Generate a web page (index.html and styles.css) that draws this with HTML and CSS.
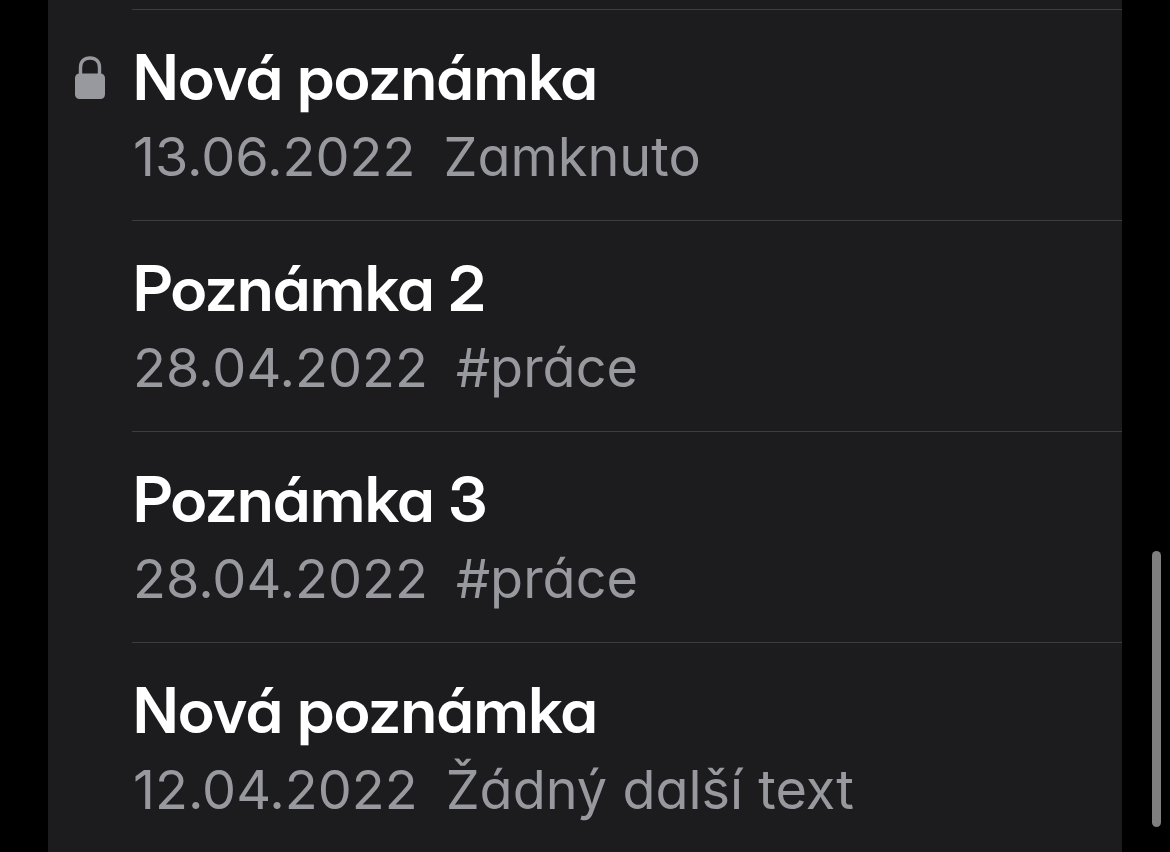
FILE: index.html
```
<!DOCTYPE html>
<html lang="cs">
<head>
<meta charset="utf-8">
<meta name="viewport" content="width=device-width, initial-scale=1">
<title>Poznámky</title>
<link rel="stylesheet" href="styles.css">
</head>
<body>
<main class="notes">
  <ul class="list">
    <li class="note">
      <span class="mark">
        <svg class="lock" viewBox="0 0 30 44" role="img" aria-label="Zamknuto"><path d="M5.500 20V11.500C5.500 5.500 9 2 15 2S24.500 5.500 24.500 11.500V20" fill="none" stroke="currentColor" stroke-width="3.400"/><rect y="17.500" width="30" height="25.500" rx="4.500" fill="currentColor"/></svg>
      </span>
      <div class="body"><h2 class="title">Nová poznámka</h2><p class="meta"><time datetime="2022-06-13">13.06.2022</time><span>Zamknuto</span></p></div>
    </li>
    <li class="note">
      <span class="mark"></span>
      <div class="body"><h2 class="title">Poznámka 2</h2><p class="meta"><time datetime="2022-04-28">28.04.2022</time><span>#práce</span></p></div>
    </li>
    <li class="note">
      <span class="mark"></span>
      <div class="body"><h2 class="title">Poznámka 3</h2><p class="meta"><time datetime="2022-04-28">28.04.2022</time><span>#práce</span></p></div>
    </li>
    <li class="note">
      <span class="mark"></span>
      <div class="body"><h2 class="title">Nová poznámka</h2><p class="meta"><time datetime="2022-04-12">12.04.2022</time><span>Žádný další text</span></p></div>
    </li>
  </ul>
</main>
<div class="scrollbar"></div>
</body>
</html>
```
FILE: styles.css
```
* { box-sizing: border-box; }
body {
  margin: 0;
  background: #000;
  color: #fff;
  font-family: Inter, "Liberation Sans", sans-serif;
  font-feature-settings: "cv11";
}
.notes {
  min-height: 100vh;
  margin: 0 48px;
  padding-top: 9px;
  background: #1c1c1e;
}
.list { margin: 0; padding: 0; list-style: none; }
.note { display: grid; grid-template-columns: 84px 1fr; }
.mark { display: flex; justify-content: center; padding-top: 47px; color: #98989f; }
.lock { width: 30px; height: 44px; }
.body { padding: 28px 0 22px 1px; border-top: 1px solid #3d3d41; }
.title { margin: 0; font-family: "Inter Display", Inter, "Liberation Sans", sans-serif; font-size: 63px; line-height: 78px; font-weight: 600; }
.meta { display: flex; gap: 28px; margin: 0; color: #98989f; font-size: 54px; line-height: 82px; font-weight: 400; }
.scrollbar {
  position: fixed;
  right: 9px;
  bottom: 25px;
  width: 9px;
  height: 276px;
  border-radius: 5px;
  background: #7f7f7f;
}
```
